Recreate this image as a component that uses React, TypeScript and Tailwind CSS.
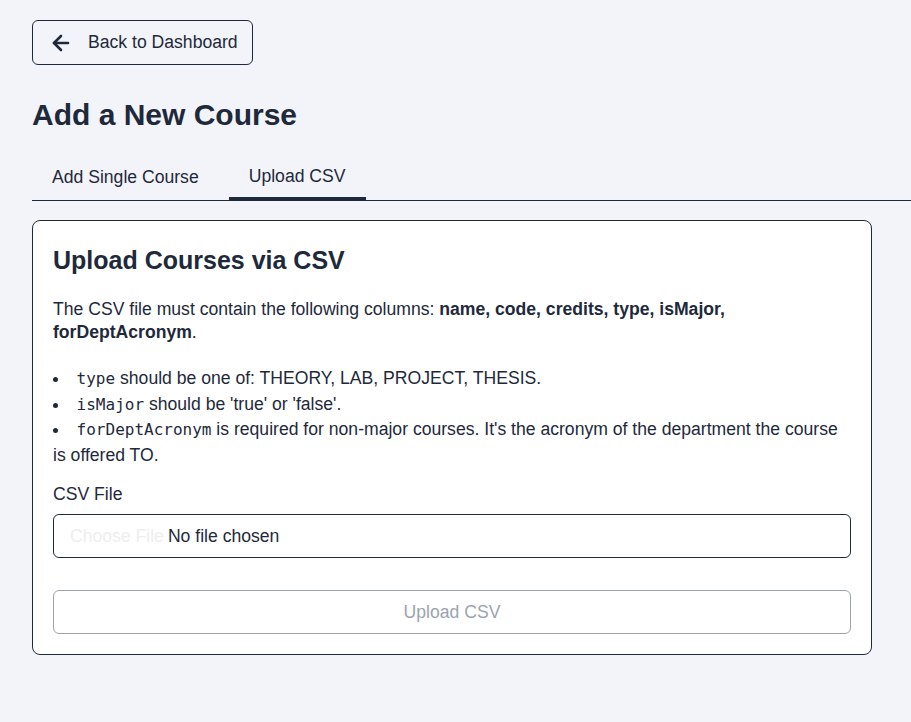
import { ArrowLeft } from 'lucide-react';

const mono = { fontFamily: '"DejaVu Sans Mono", "Liberation Mono", monospace' };

export default function App() {
  return (
    <div
      className="min-h-screen bg-[#f3f4f9] text-[#1e293b] pt-5 pl-8"
      style={{ fontFamily: '"Liberation Sans", Arial, sans-serif' }}
    >
      {/* Back button */}
      <button className="flex items-center h-[45px] w-[221px] rounded-md border border-[#1e293b] pl-4 text-[17.6px]">
        <ArrowLeft className="h-[24px] w-[24px]" strokeWidth={2.6} />
        <span className="ml-[15px]">Back to Dashboard</span>
      </button>

      <h1 className="mt-[31px] text-[30px] font-bold leading-[38px]">Add a New Course</h1>

      {/* Tabs */}
      <div className="mt-[19px] flex border-b border-[#1e293b]">
        <button className="px-5 pt-[2px] h-[47px] text-[17.6px]">Add Single Course</button>
        <button className="ml-[10px] px-5 pt-[4px] pb-[2px] h-[47px] text-[17.6px] border-b-[3px] border-[#1e293b] -mb-px">
          Upload CSV
        </button>
      </div>

      {/* Card */}
      <div className="mt-[19px] w-[840px] rounded-lg border border-[#1e293b] bg-white p-5">
        <h2 className="text-[25px] font-bold leading-[36px] mt-[1px]">Upload Courses via CSV</h2>
        <p className="mt-[20px] text-[17.6px] leading-[23px]">
          The CSV file must contain the following columns:{' '}
          <strong>name, code, credits, type, isMajor, forDeptAcronym</strong>.
        </p>
        <ul className="mt-[22px] list-disc list-inside text-[17.6px] leading-[24.7px]">
          <li>
            <code className="text-[16px]" style={mono}>type</code> should be one of: THEORY, LAB, PROJECT, THESIS.
          </li>
          <li>
            <code className="text-[16px]" style={mono}>isMajor</code> should be 'true' or 'false'.
          </li>
          <li>
            <code className="text-[16px]" style={mono}>forDeptAcronym</code> is required for non-major courses. It's the acronym of the department the course is offered TO.
          </li>
        </ul>

        <label className="mt-[14px] block text-[17.6px] leading-[24px]">CSV File</label>
        <input
          type="file"
          accept=".csv"
          className="mt-[8px] block w-full rounded-md border border-[#1e293b] px-4 py-[9px] leading-[24px] text-[17.6px] file:mr-1 file:border-0 file:bg-transparent file:p-0 file:text-[17.6px] file:text-[#eeeeee]"
          style={{ fontFamily: '"Liberation Sans", Arial, sans-serif' }}
        />

        <button
          disabled
          className="mt-[32px] w-full h-[44px] rounded-md border border-[#9ca3af] text-[17.6px] text-[#9ca3af]"
        >
          Upload CSV
        </button>
      </div>
    </div>
  );
}
